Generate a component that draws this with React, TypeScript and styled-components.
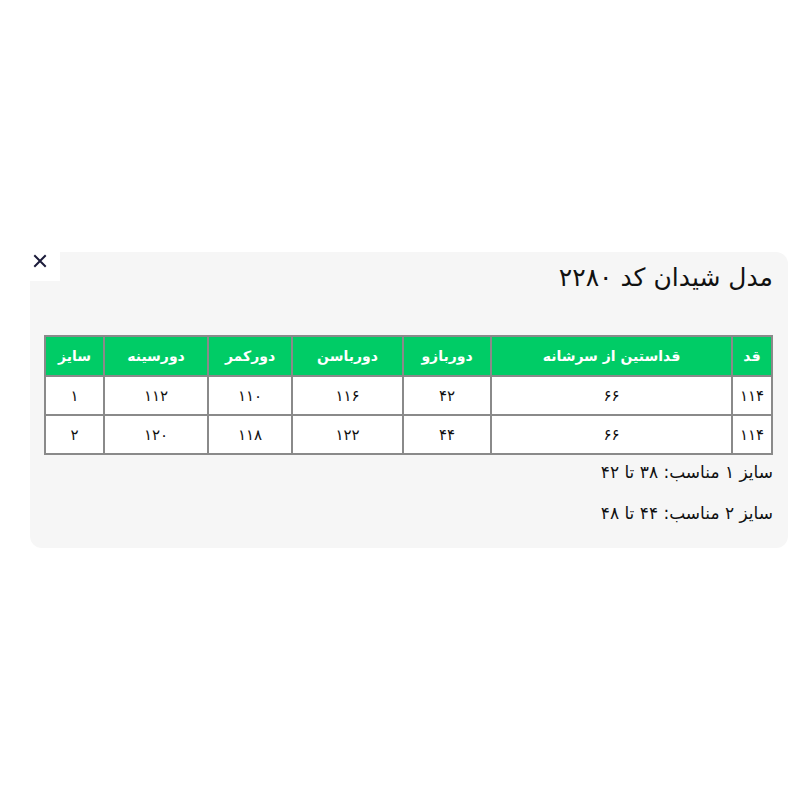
import styled, { createGlobalStyle } from "styled-components";

const Global = createGlobalStyle`
  html, body {
    margin: 0;
    padding: 0;
    background: #fff;
    font-family: "DejaVu Sans", "Noto Sans", sans-serif;
  }
`;

const Page = styled.div`
  position: relative;
  padding: 252px 12px 0 30px;
`;

const Panel = styled.div`
  background: #f6f6f6;
  border-radius: 12px;
  padding: 8px 15px 18px 15px;
  direction: rtl;
`;

const CloseButton = styled.button`
  position: absolute;
  left: 20px;
  top: 240px;
  width: 40px;
  height: 41px;
  background: #fff;
  border: none;
  padding: 0;
  display: flex;
  align-items: center;
  justify-content: center;
  cursor: pointer;
`;

const Title = styled.h2`
  margin: 0 0 39px;
  font-size: 25px;
  font-weight: normal;
  color: #111;
  line-height: 36px;
`;

const Table = styled.table`
  width: 100%;
  border-collapse: collapse;
  table-layout: fixed;
  font-size: 15px;
`;

const Th = styled.th<{ $w: number }>`
  box-sizing: border-box;
  width: ${p => p.$w}px;
  background: #00cc66;
  color: #fff;
  font-size: 14px;
  font-weight: bold;
  height: 40px;
  border: 2px solid #8a8a8a;
  padding: 0 4px;
  text-align: center;
`;

const Td = styled.td`
  box-sizing: border-box;
  background: #fff;
  color: #111;
  height: 39px;
  border: 2px solid #8a8a8a;
  padding: 0 4px;
  text-align: center;
`;

const Note = styled.p`
  margin: 0;
  font-size: 17px;
  line-height: 34px;
  color: #111;
  & + & {
    margin-top: 7px;
  }
`;

const columns: [string, number][] = [
  ["قد", 40],
  ["قداستین از سرشانه", 241],
  ["دوربازو", 88],
  ["دورباسن", 111],
  ["دورکمر", 84],
  ["دورسینه", 104],
  ["سایز", 59],
];

const rows = [
  ["۱۱۴", "۶۶", "۴۲", "۱۱۶", "۱۱۰", "۱۱۲", "۱"],
  ["۱۱۴", "۶۶", "۴۴", "۱۲۲", "۱۱۸", "۱۲۰", "۲"],
];

export default function App() {
  return (
    <Page>
      <Global />
      <CloseButton aria-label="بستن">
        <svg width="14" height="14" viewBox="0 0 14 14">
          <path d="M2 2 L12 12 M12 2 L2 12" stroke="#1b1b3a" strokeWidth="2" strokeLinecap="square" />
        </svg>
      </CloseButton>
      <Panel>
        <Title>مدل شیدان کد ۲۲۸۰</Title>
        <Table>
          <thead>
            <tr>
              {columns.map(([name, w]) => (
                <Th key={name} $w={w}>{name}</Th>
              ))}
            </tr>
          </thead>
          <tbody>
            {rows.map((r, i) => (
              <tr key={i}>
                {r.map((c, j) => <Td key={j}>{c}</Td>)}
              </tr>
            ))}
          </tbody>
        </Table>
        <Note>سایز ۱ مناسب: ۳۸ تا ۴۲</Note>
        <Note>سایز ۲ مناسب: ۴۴ تا ۴۸</Note>
      </Panel>
    </Page>
  );
}
